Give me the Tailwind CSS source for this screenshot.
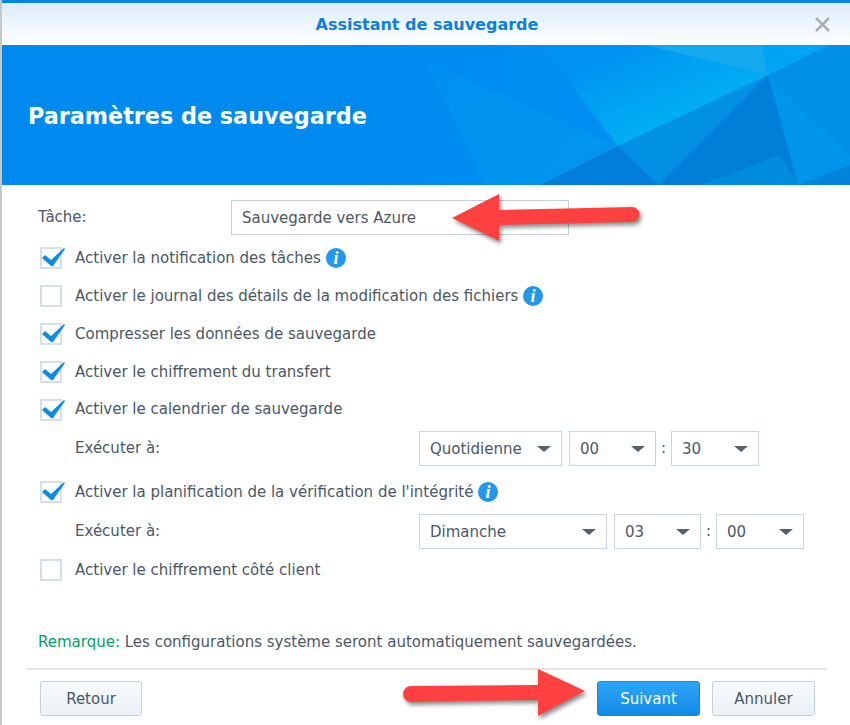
<!DOCTYPE html>
<html lang="fr">
<head>
  <meta charset="UTF-8" />
  <title>Assistant de sauvegarde</title>
  <script src="https://cdn.jsdelivr.net/npm/@tailwindcss/browser@4"></script>
</head>
<body class="bg-white text-[#4a5866] font-['DejaVu_Sans',sans-serif] text-[15px]">
  <div class="relative w-[850px] h-[725px] overflow-hidden border-l-2 border-[#c8c8c8] bg-white">
    <!-- title bar -->
    <div class="h-[45px] border-t-[3px] border-[#0086e5] bg-gradient-to-b from-[#dcecfb] to-white flex items-center justify-center relative">
      <span class="font-bold text-[16px] text-[#0f7fdc] ml-[2px] pt-[1px]">Assistant de sauvegarde</span>
      <svg class="absolute right-[19px] top-[13px]" width="17" height="17" viewBox="0 0 17 17"><path d="M2 2 L15 15 M15 2 L2 15" stroke="#a9b0b6" stroke-width="2.6" fill="none"/></svg>
    </div>

    <!-- banner -->
    <div class="relative h-[140px] bg-[#0089ee] flex items-center pl-[26px]">
      <svg class="absolute left-[-2px] top-0" width="850" height="140" viewBox="0 45 850 140">
        <defs>
          <linearGradient id="g1" x1="0" y1="0" x2="1" y2="0"><stop offset="0" stop-color="#0089ee"/><stop offset="1" stop-color="#0095f5"/></linearGradient>
          <linearGradient id="g2" gradientUnits="userSpaceOnUse" x1="590" y1="60" x2="625" y2="140"><stop offset="0" stop-color="#0092f2"/><stop offset="1" stop-color="#00aef2"/></linearGradient>
          <linearGradient id="g3" gradientUnits="userSpaceOnUse" x1="430" y1="60" x2="600" y2="170"><stop offset="0" stop-color="#0091f0"/><stop offset="1" stop-color="#0095ee"/></linearGradient>
        </defs>
        <rect x="300" y="45" width="550" height="140" fill="url(#g1)"/>
        <polygon points="425,60 618,146 540,185 485,185" fill="url(#g3)"/>
        <polygon points="540,45 645,45 768,75 618,146" fill="url(#g2)"/>
        <polygon points="645,45 762,45 768,75" fill="#14a9ee"/>
        <polygon points="762,45 830,45 768,75" fill="#00a4f5"/>
        <polygon points="830,45 850,45 850,185 798,185 768,75" fill="#0090e6"/>
        <polygon points="768,75 850,155 850,165 798,185" fill="#0094ea"/>
        <polygon points="618,146 768,75 658,185" fill="#0090e4"/>
        <polygon points="768,75 798,185 658,185" fill="#007fd8"/>
        <polygon points="700,185 780,155 798,185" fill="#008cde"/>
        <polygon points="540,185 618,146 658,185" fill="#007ed9"/>
        <polygon points="798,185 850,165 850,185" fill="#0085da"/>
      </svg>
      <h1 class="relative font-bold text-[22.3px] text-white pt-[3px]">Paramètres de sauvegarde</h1>
    </div>

    <!-- form -->
    <div class="pl-[36px] pt-[15px]">
      <div class="flex items-center h-[35px]">
        <span class="w-[193px] -mt-[1px]">Tâche:</span>
        <div class="w-[338px] h-[35px] border border-[#c0d0e0] flex items-center pl-[10px] pt-[2px]">Sauvegarde vers Azure</div>
      </div>

      <div class="mt-[4px] flex items-center h-[38px] pl-[2px]">
        <span class="relative w-[22px] h-[22px] border-2 border-[#d3dfea] bg-white mr-[13px]">
          <svg class="absolute left-[-2px] top-[-2px] overflow-visible" width="26" height="22" viewBox="0 0 26 22"><path d="M2 11 L5 8 L11 13 L24 1 L25 2 L13 19 L11 19 Z" fill="#0e8de6"/></svg>
        </span>
        <span>Activer la notification des tâches</span>
        <svg class="ml-[5px]" width="20" height="20" viewBox="0 0 20 20"><circle cx="10" cy="10" r="10" fill="#2196ea"/><text x="10" y="15.5" text-anchor="middle" font-family="Liberation Serif" font-style="italic" font-weight="bold" font-size="18" fill="#fff">i</text></svg>
      </div>
      <div class="flex items-center h-[38px] pl-[2px]">
        <span class="w-[22px] h-[22px] border-2 border-[#d3dfea] bg-white mr-[13px]"></span>
        <span>Activer le journal des détails de la modification des fichiers</span>
        <svg class="ml-[5px]" width="20" height="20" viewBox="0 0 20 20"><circle cx="10" cy="10" r="10" fill="#2196ea"/><text x="10" y="15.5" text-anchor="middle" font-family="Liberation Serif" font-style="italic" font-weight="bold" font-size="18" fill="#fff">i</text></svg>
      </div>
      <div class="flex items-center h-[38px] pl-[2px]">
        <span class="relative w-[22px] h-[22px] border-2 border-[#d3dfea] bg-white mr-[13px]">
          <svg class="absolute left-[-2px] top-[-2px] overflow-visible" width="26" height="22" viewBox="0 0 26 22"><path d="M2 11 L5 8 L11 13 L24 1 L25 2 L13 19 L11 19 Z" fill="#0e8de6"/></svg>
        </span>
        <span>Compresser les données de sauvegarde</span>
      </div>
      <div class="flex items-center h-[38px] pl-[2px]">
        <span class="relative w-[22px] h-[22px] border-2 border-[#d3dfea] bg-white mr-[13px]">
          <svg class="absolute left-[-2px] top-[-2px] overflow-visible" width="26" height="22" viewBox="0 0 26 22"><path d="M2 11 L5 8 L11 13 L24 1 L25 2 L13 19 L11 19 Z" fill="#0e8de6"/></svg>
        </span>
        <span>Activer le chiffrement du transfert</span>
      </div>
      <div class="flex items-center h-[37px] pl-[2px]">
        <span class="relative w-[22px] h-[22px] border-2 border-[#d3dfea] bg-white mr-[13px]">
          <svg class="absolute left-[-2px] top-[-2px] overflow-visible" width="26" height="22" viewBox="0 0 26 22"><path d="M2 11 L5 8 L11 13 L24 1 L25 2 L13 19 L11 19 Z" fill="#0e8de6"/></svg>
        </span>
        <span>Activer le calendrier de sauvegarde</span>
      </div>

      <div class="flex items-center h-[35px] mt-[3px] pl-[37px]">
        <span class="w-[344px]">Exécuter à:</span>
        <div class="w-[143px] h-[35px] border border-[#c8d4e0] flex items-center justify-between pl-[10px] pr-[10px]"><span class="pt-[1px]">Quotidienne</span><span class="w-0 h-0 border-x-[7px] border-x-transparent border-t-[6px] border-t-[#55606b]"></span></div>
        <div class="ml-[7px] w-[87px] h-[35px] border border-[#c8d4e0] flex items-center justify-between pl-[10px] pr-[10px]"><span class="pt-[1px]">00</span><span class="w-0 h-0 border-x-[7px] border-x-transparent border-t-[6px] border-t-[#55606b]"></span></div>
        <span class="w-[15px] text-center">:</span>
        <div class="w-[88px] h-[35px] border border-[#c8d4e0] flex items-center justify-between pl-[10px] pr-[10px]"><span class="pt-[1px]">30</span><span class="w-0 h-0 border-x-[7px] border-x-transparent border-t-[6px] border-t-[#55606b]"></span></div>
      </div>

      <div class="flex items-center h-[38px] mt-[7px] pl-[2px]">
        <span class="relative w-[22px] h-[22px] border-2 border-[#d3dfea] bg-white mr-[13px]">
          <svg class="absolute left-[-2px] top-[-2px] overflow-visible" width="26" height="22" viewBox="0 0 26 22"><path d="M2 11 L5 8 L11 13 L24 1 L25 2 L13 19 L11 19 Z" fill="#0e8de6"/></svg>
        </span>
        <span>Activer la planification de la vérification de l'intégrité</span>
        <svg class="ml-[5px]" width="20" height="20" viewBox="0 0 20 20"><circle cx="10" cy="10" r="10" fill="#2196ea"/><text x="10" y="15.5" text-anchor="middle" font-family="Liberation Serif" font-style="italic" font-weight="bold" font-size="18" fill="#fff">i</text></svg>
      </div>

      <div class="flex items-center h-[35px] mt-[3px] pl-[37px]">
        <span class="w-[344px]">Exécuter à:</span>
        <div class="w-[188px] h-[35px] border border-[#c8d4e0] flex items-center justify-between pl-[10px] pr-[10px]"><span class="pt-[1px]">Dimanche</span><span class="w-0 h-0 border-x-[7px] border-x-transparent border-t-[6px] border-t-[#55606b]"></span></div>
        <div class="ml-[7px] w-[87px] h-[35px] border border-[#c8d4e0] flex items-center justify-between pl-[10px] pr-[10px]"><span class="pt-[1px]">03</span><span class="w-0 h-0 border-x-[7px] border-x-transparent border-t-[6px] border-t-[#55606b]"></span></div>
        <span class="w-[15px] text-center">:</span>
        <div class="w-[88px] h-[35px] border border-[#c8d4e0] flex items-center justify-between pl-[10px] pr-[10px]"><span class="pt-[1px]">00</span><span class="w-0 h-0 border-x-[7px] border-x-transparent border-t-[6px] border-t-[#55606b]"></span></div>
      </div>

      <div class="flex items-center h-[38px] mt-[2px] pl-[2px]">
        <span class="w-[22px] h-[22px] border-2 border-[#d3dfea] bg-white mr-[13px]"></span>
        <span>Activer le chiffrement côté client</span>
      </div>

      <p class="mt-[43px] leading-[20px]"><span class="text-[#00a06a]">Remarque:</span> Les configurations système seront automatiquement sauvegardées.</p>
    </div>

    <!-- footer -->
    <div class="mx-[25px] mt-[16px] w-[800px] border-t-2 border-[#e4e4e4] pt-[11px] pl-[13px] flex">
      <button class="w-[102px] h-[35px] rounded-[3px] border border-[#c3d0de] bg-gradient-to-b from-[#f8fbfd] to-[#e9f0f6] pt-[1px]">Retour</button>
      <button class="ml-[455px] w-[103px] h-[35px] rounded-[3px] border border-[#1a86d8] bg-gradient-to-b from-[#2ea6f8] to-[#0f8ae6] text-white pt-[1px]">Suivant</button>
      <button class="ml-[12px] w-[103px] h-[35px] rounded-[3px] border border-[#c3d0de] bg-gradient-to-b from-[#f8fbfd] to-[#e9f0f6] pt-[1px]">Annuler</button>
    </div>

    <!-- annotation arrows -->
    <svg class="absolute left-[-2px] top-0 drop-shadow-[2px_3px_2px_rgba(0,0,0,0.45)]" width="850" height="725" viewBox="0 0 850 725">
      <path d="M452 218 L499 194 L499 210 L632 207 A7.5 7.5 0 0 1 632 222 L499 225 L499 241 Z" fill="#ff4040"/>
      <path d="M585 691 L538 669 L538 685 L411 686 A8 8 0 0 0 411 702 L538 700 L538 716 Z" fill="#ff4040"/>
    </svg>
  </div>
</body>
</html>
